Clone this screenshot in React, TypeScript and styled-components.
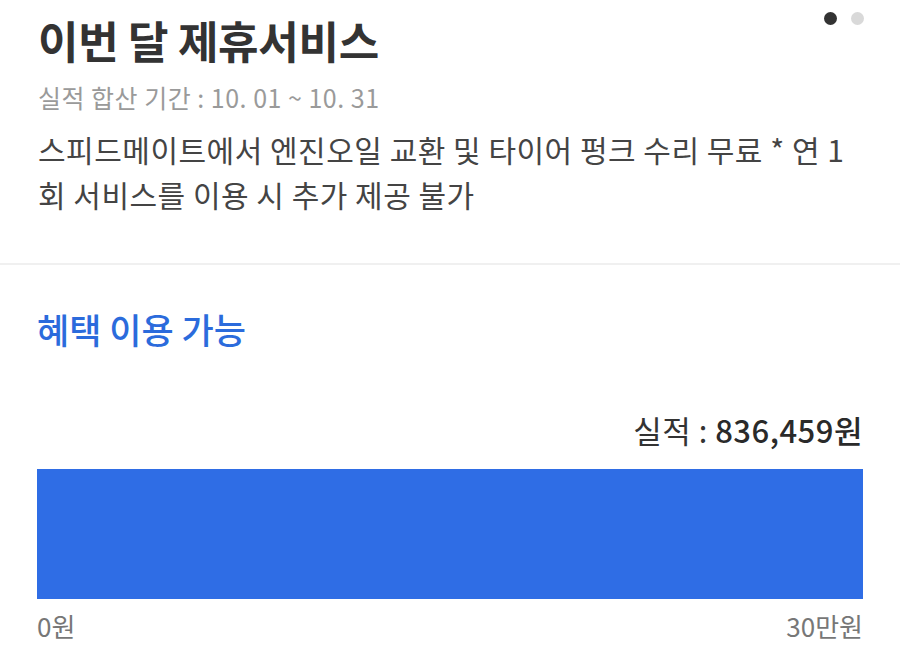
import React from 'react';
import styled, { createGlobalStyle } from 'styled-components';

const GlobalStyle = createGlobalStyle`
  html, body {
    margin: 0;
    padding: 0;
    background: #ffffff;
  }
  body {
    font-family: "Noto Sans CJK KR", "Noto Sans", sans-serif;
    -webkit-font-smoothing: antialiased;
  }
`;

const Page = styled.div`
  width: 900px;
  height: 670px;
  background: #ffffff;
  overflow: hidden;
`;

const Intro = styled.section`
  padding: 10px 37px 46px 38px;
  border-bottom: 2px solid #f0f0f0;
`;

const HeaderRow = styled.div`
  display: flex;
  justify-content: space-between;
  align-items: flex-start;
`;

const Title = styled.h1`
  margin: 0;
  font-size: 44px;
  line-height: 60px;
  font-weight: 700;
  color: #333333;
  letter-spacing: -0.3px;
`;

const Pager = styled.div`
  display: flex;
  gap: 14px;
  margin-top: 2px;
  margin-right: -1px;
`;

const Dot = styled.span<{ $active?: boolean }>`
  width: 13px;
  height: 13px;
  border-radius: 50%;
  background: ${(p) => (p.$active ? '#333333' : '#d9d9d9')};
`;

const Period = styled.p`
  margin: 10px 0 0;
  font-size: 25px;
  line-height: 34px;
  letter-spacing: 0.5px;
  color: #9a9a9a;
`;

const Description = styled.p`
  margin: 13px 0 0;
  font-size: 30px;
  line-height: 45px;
  letter-spacing: 0.5px;
  color: #444444;
`;

const Benefit = styled.section`
  padding: 41px 37px 0 37px;
`;

const Status = styled.h2`
  margin: 0;
  font-size: 35px;
  line-height: 46px;
  font-weight: 500;
  color: #2b6bdc;
`;

const Amount = styled.div`
  margin-top: 58px;
  text-align: right;
  font-size: 31px;
  line-height: 40px;
  letter-spacing: 0.5px;
  color: #333333;
`;

const AmountValue = styled.span`
  font-weight: 500;
  color: #2a2a2a;
`;

const Track = styled.div`
  margin-top: 19px;
  height: 130px;
  background: #e8e8e8;
`;

const Fill = styled.div`
  height: 100%;
  background: #2f6de5;
`;

const Scale = styled.div`
  margin-top: 10px;
  display: flex;
  justify-content: space-between;
  font-size: 26px;
  line-height: 34px;
  color: #777777;
`;

const used = 836459;
const goal = 300000;

export default function App() {
  const pct = Math.min(100, (used / goal) * 100);

  return (
    <Page>
      <GlobalStyle />
      <Intro>
        <HeaderRow>
          <Title>이번 달 제휴서비스</Title>
          <Pager>
            <Dot $active />
            <Dot />
          </Pager>
        </HeaderRow>
        <Period>실적 합산 기간 : 10. 01 ~ 10. 31</Period>
        <Description>
          스피드메이트에서 엔진오일 교환 및 타이어 펑크 수리 무료 * 연 1
          <br />
          회 서비스를 이용 시 추가 제공 불가
        </Description>
      </Intro>
      <Benefit>
        <Status>혜택 이용 가능</Status>
        <Amount>
          실적 : <AmountValue>{used.toLocaleString('ko-KR')}원</AmountValue>
        </Amount>
        <Track>
          <Fill style={{ width: `${pct}%` }} />
        </Track>
        <Scale>
          <span>0원</span>
          <span>30만원</span>
        </Scale>
      </Benefit>
    </Page>
  );
}
